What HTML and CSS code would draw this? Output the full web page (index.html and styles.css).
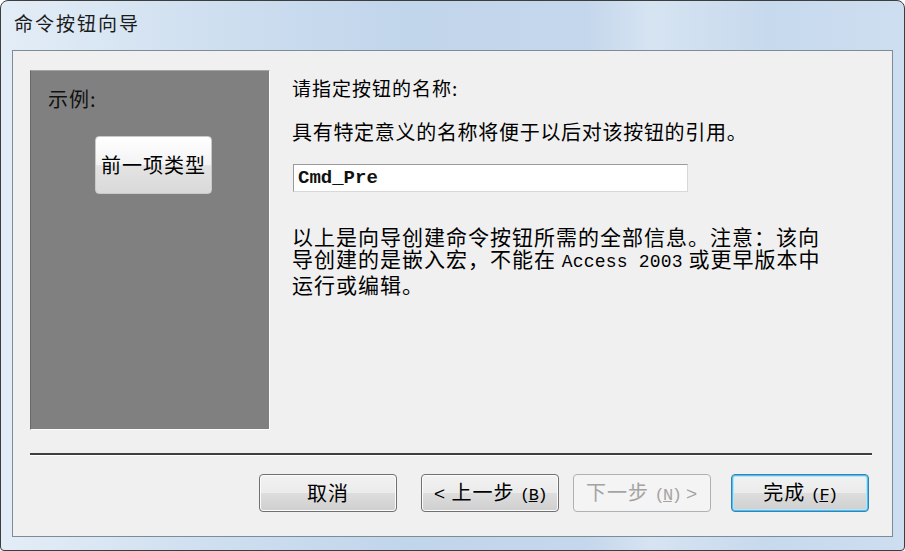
FILE: index.html
```html
<!DOCTYPE html>
<html lang="zh-CN">
<head>
	<meta charset="UTF-8">
	<title>命令按钮向导</title>
	<link rel="stylesheet" href="styles.css">
</head>
<body>
	<div class="window">
		<div class="titlebar">命令按钮向导</div>
		<div class="client">
			<div class="main">
				<!-- 左边的示例区 -->
				<div class="sample">
					<div class="sample-label">示例:</div>
					<div class="sample-btn">前一项类型</div>
				</div>
				<!-- 右边的说明 -->
				<div class="content">
					<p class="prompt">请指定按钮的名称:</p>
					<p class="hint">具有特定意义的名称将便于以后对该按钮的引用。</p>
					<input class="name-input" type="text" value="Cmd_Pre">
					<p class="info">以上是向导创建命令按钮所需的全部信息。注意：该向<br>导创建的是嵌入宏，不能在 <span class="latin">Access 2003</span> 或更早版本中<br>运行或编辑。</p>
				</div>
			</div>
			<div class="sep"></div>
			<div class="buttons">
				<button class="btn btn-cancel" type="button">取消</button>
				<button class="btn btn-back" type="button"><span class="arrow">&lt;</span> 上一步 <span class="key">(<u>B</u>)</span></button>
				<button class="btn btn-next" type="button" disabled>下一步 <span class="key">(<u>N</u>)</span> <span class="arrow">&gt;</span></button>
				<button class="btn btn-finish" type="button">完成 <span class="key">(<u>F</u>)</span></button>
			</div>
		</div>
	</div>
</body>
</html>
```

FILE: styles.css
```css
*{
	box-sizing: border-box;
}
body{
	margin: 0;
	background: #fff;
	font-family: "Noto Sans CJK SC", sans-serif;
}
.window{
	width: 905px;
	height: 551px;
	border: 1px solid #3d3d3d;
	border-radius: 8px 8px 4px 4px;
	padding: 0 11px 13px 11px;
	display: flex;
	flex-direction: column;
	background: linear-gradient(to right, #e3edf7 0%, #cddeef 25%, #c1d5eb 45%, #c5d7ec 65%, #d6e4f2 72%, #c7d9ed 85%, #cddef0 100%);
	overflow: hidden;
}
.titlebar{
	height: 49px;
	line-height: 43px;
	padding-left: 2px;
	font-size: 19px;
	letter-spacing: 2px;
	color: #1b1b1b;
}
.client{
	flex: 1;
	background: #f0f0f0;
	border: 1px solid #7f8b99;
}
.main{
	display: flex;
	padding: 19px 0 0 17px;
}
.sample{
	width: 240px;
	height: 360px;
	background: #808080;
	border: 1px solid;
	border-color: #a4a4a4 #fbfbfb #fbfbfb #686868;
	display: flex;
	flex-direction: column;
}
.sample-label{
	margin: 17px 0 0 17px;
	font-size: 20px;
	letter-spacing: 1px;
	line-height: 22px;
	color: #111;
}
.sample-btn{
	width: 117px;
	height: 58px;
	margin: 26px 0 0 64px;
	border: 1px solid #c9c9c9;
	border-radius: 4px;
	background: linear-gradient(#ffffff 0%, #f3f3f3 50%, #e4e4e4 51%, #d9d9d9 100%);
	font-size: 20px;
	letter-spacing: 1px;
	text-align: center;
	line-height: 56px;
	color: #000;
}
.content{
	margin-left: 22px;
	font-size: 20px;
	letter-spacing: 1px;
	line-height: 22px;
	color: #000;
}
.content p{
	margin: 0;
}
.prompt{
	padding-top: 7px;
	font-size: 19px;
}
.hint{
	margin-top: 22px !important;
	letter-spacing: 0.7px;
}
.name-input{
	display: block;
	width: 395px;
	height: 28px;
	margin: 21px 0 0 1px;
	padding: 0 4px;
	border: 1px solid;
	border-color: #9a9a9a #d8d8d8 #d8d8d8 #9a9a9a;
	background: #fff;
	font-family: "Liberation Mono", monospace;
	font-size: 19px;
	font-weight: bold;
	color: #111;
	outline: none;
}
.info{
	margin-top: 33px !important;
	font-size: 21px;
}
.latin{
	font-family: "Liberation Mono", monospace;
	font-size: 18px;
	letter-spacing: 0.2px;
}
.sep{
	margin: 23px 20px 0 17px;
	height: 3px;
	border-top: 2px solid #3f3f3f;
	border-bottom: 1px solid #fff;
}
.buttons{
	display: flex;
	justify-content: flex-end;
	padding: 18px 23px 0 0;
}
.btn{
	width: 138px;
	height: 38px;
	padding: 0;
	border: 1px solid #707070;
	border-radius: 4px;
	background: linear-gradient(#f2f2f2 0%, #ebebeb 50%, #dddddd 51%, #cfcfcf 100%);
	box-shadow: inset 0 0 0 1px #fcfcfc;
	font-family: "Noto Sans CJK SC", sans-serif;
	font-size: 20px;
	letter-spacing: 1px;
	color: #000;
	line-height: 34px;
}
.btn-cancel{
	margin-right: 24px;
}
.btn-back{
	margin-right: 14px;
}
.btn-next{
	margin-right: 20px;
	border-color: #adb2b5;
	background: #f4f4f4;
	box-shadow: none;
	color: #a3a3a3;
}
.btn-finish{
	border-color: #3c7fb1;
	box-shadow: inset 0 0 0 1px #48c1f0, inset 0 0 0 2px #b6e6f9;
}
.key{
	font-family: "Liberation Mono", monospace;
	font-size: 17px;
	letter-spacing: -1.5px;
}
.arrow{
	font-family: "Liberation Sans", sans-serif;
	font-size: 19px;
	font-weight: normal;
}
```
